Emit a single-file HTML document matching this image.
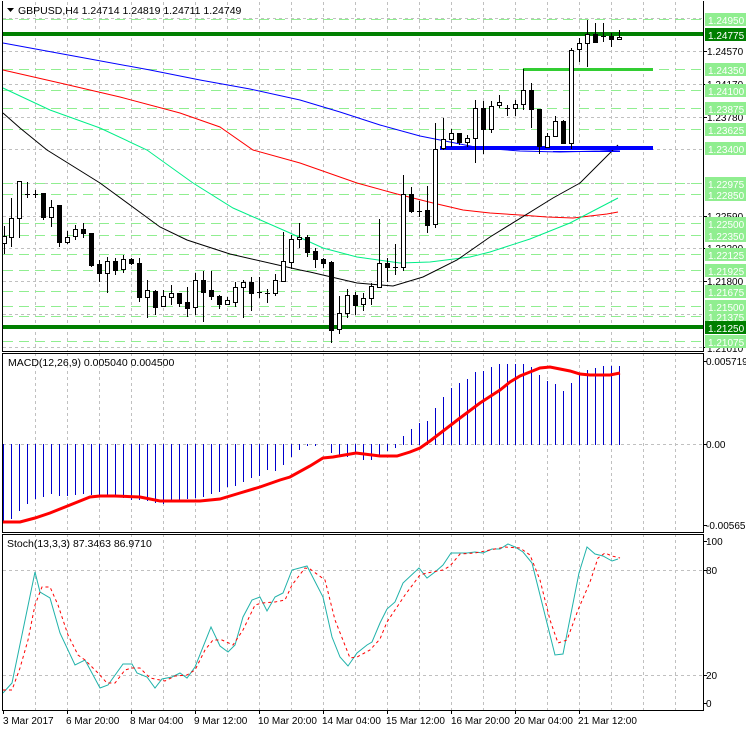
<!DOCTYPE html>
<html><head><meta charset="utf-8"><style>
html,body{margin:0;padding:0;background:#fff;}
svg{display:block;font-family:"Liberation Sans",sans-serif;font-size:10.5px;}
.ax{font-size:10px;}
</style></head><body>
<svg width="746" height="731" viewBox="0 0 746 731" xmlns="http://www.w3.org/2000/svg">
<rect width="746" height="731" fill="#fff"/>
<g shape-rendering="crispEdges">
<g stroke="#c0c0c0" stroke-dasharray="3,3">
<path d="M35.5 2V351M67.5 2V351M99.5 2V351M131.5 2V351M163.5 2V351M195.5 2V351M227.5 2V351M259.5 2V351M291.5 2V351M323.5 2V351M355.5 2V351M387.5 2V351M419.5 2V351M451.5 2V351M483.5 2V351M515.5 2V351M547.5 2V351M579.5 2V351M611.5 2V351M643.5 2V351M675.5 2V351"/>
<path d="M35.5 353V532M67.5 353V532M99.5 353V532M131.5 353V532M163.5 353V532M195.5 353V532M227.5 353V532M259.5 353V532M291.5 353V532M323.5 353V532M355.5 353V532M387.5 353V532M419.5 353V532M451.5 353V532M483.5 353V532M515.5 353V532M547.5 353V532M579.5 353V532M611.5 353V532M643.5 353V532M675.5 353V532"/>
<path d="M35.5 534V710M67.5 534V710M99.5 534V710M131.5 534V710M163.5 534V710M195.5 534V710M227.5 534V710M259.5 534V710M291.5 534V710M323.5 534V710M355.5 534V710M387.5 534V710M419.5 534V710M451.5 534V710M483.5 534V710M515.5 534V710M547.5 534V710M579.5 534V710M611.5 534V710M643.5 534V710M675.5 534V710"/>
<path d="M3 18.5H703M3 51.5H703M3 84.5H703M3 117.5H703M3 149.5H703M3 183.5H703M3 216.5H703M3 248.5H703M3 281.5H703M3 314.5H703M3 347.5H703"/>
<path d="M3 444.5H703"/>
<path d="M3 570.5H703M3 675.5H703"/>
</g>
<g stroke="#90ee90" stroke-dasharray="10,6">
<path d="M3 19.5H703M3 69.5H703M3 90.5H703M3 108.5H703M3 129.5H703M3 183.5H703M3 194.5H703M3 223.5H703M3 235.5H703M3 254.5H703M3 270.5H703M3 291.5H703M3 306.5H703M3 316.5H703M3 341.5H703"/>
</g>
<rect x="3" y="32" width="700" height="4" fill="#007f00"/>
<rect x="3" y="325" width="700" height="4" fill="#007f00"/>
<rect x="523" y="68" width="130" height="3" fill="#32cd32"/>
</g>
<g fill="none" stroke-width="1">
<polyline stroke="#0000ff" points="3,43 90,59 150,70 200,80 250,89 300,100 340,112 380,125 420,136 440,140 480,148 520,151 560,152 600,151 620,150"/>
<polyline stroke="#ff0000" points="3,70 60,83 120,97 180,113 220,127 253,150 300,163 357,183 397,194 433,203 463,210 490,213 520,215 547,217 573,218 607,214 618,212"/>
<polyline stroke="#00ee88" points="3,88 50,110 100,128 147,150 193,183 233,208 290,233 323,248 357,257 400,263 430,262 470,257 490,252 530,239 570,223 618,198"/>
<polyline stroke="#000" points="3,113 20,128 47,150 100,183 160,227 187,240 230,254 300,270 310,272 357,283 393,286 423,277 457,260 490,237 553,198 580,183 618,145"/>
</g>
<g shape-rendering="crispEdges">
<rect x="440" y="146" width="213" height="4" fill="#0000ff"/>
<path d="M553 151.5H620" stroke="#0000ff"/>
</g>
<g shape-rendering="crispEdges" stroke="#000">
<path d="M4.5 226V254M11.5 198V247M19.5 181V238M27.5 182V198M35.5 190V198M43.5 193V220M51.5 200V227M59.5 205V247M67.5 231V244M75.5 225V240M83.5 223V238M91.5 233V267M99.5 260V282M107.5 257V293M115.5 258V275M123.5 255V273M131.5 258V265M139.5 258V302M147.5 280V318M155.5 290V315M163.5 290V307M171.5 285V305M179.5 293V307M187.5 287V317M195.5 273V315M203.5 271V322M211.5 271V300M219.5 295V309M227.5 297V305M235.5 282V307M243.5 280V318M251.5 277V311M259.5 277V298M267.5 289V303M275.5 274V296M283.5 232V282M291.5 235V269M299.5 223V248M307.5 235V257M315.5 248V268M323.5 258V268M331.5 261V343M339.5 296V334M347.5 289V318M355.5 292V315M363.5 293V311M371.5 283V305M379.5 219V287M387.5 258V282M395.5 244V275M403.5 175V271M411.5 187V213M419.5 201V217M427.5 186V233M435.5 123V228M443.5 118V150M451.5 129V147M459.5 133V145M467.5 135V147M475.5 100V163M483.5 101V154M491.5 101V133M499.5 95V108M507.5 105V116M515.5 100V116M523.5 69V110M531.5 83V128M539.5 109V154M547.5 133V148M555.5 116V137M563.5 120V143M571.5 48V149M579.5 38V62M587.5 20V67M595.5 23V43M603.5 23V42M611.5 33V47M619.5 30V39"/>
<path d="M25 194.5H30M33 194.5H38M257 292.5H262M265 293.5H270M393 267.5H398M417 211.5H422M505 108.5H510M601 36.5H606" />
<g fill="#fff">
<rect x="2.5" y="236.5" width="4" height="7"/><rect x="9.5" y="218.5" width="4" height="19"/><rect x="17.5" y="181.5" width="4" height="37"/><rect x="49.5" y="207.5" width="4" height="10"/><rect x="65.5" y="237.5" width="4" height="5"/><rect x="73.5" y="229.5" width="4" height="7"/><rect x="105.5" y="261.5" width="4" height="12"/><rect x="121.5" y="259.5" width="4" height="10"/><rect x="145.5" y="290.5" width="4" height="7"/><rect x="161.5" y="296.5" width="4" height="10"/><rect x="169.5" y="293.5" width="4" height="4"/><rect x="193.5" y="280.5" width="4" height="27"/><rect x="225.5" y="300.5" width="4" height="4"/><rect x="233.5" y="287.5" width="4" height="15"/><rect x="241.5" y="282.5" width="4" height="5"/><rect x="273.5" y="280.5" width="4" height="13"/><rect x="281.5" y="261.5" width="4" height="20"/><rect x="289.5" y="239.5" width="4" height="23"/><rect x="297.5" y="237.5" width="4" height="2"/><rect x="337.5" y="313.5" width="4" height="16"/><rect x="345.5" y="295.5" width="4" height="18"/><rect x="361.5" y="298.5" width="4" height="6"/><rect x="369.5" y="286.5" width="4" height="12"/><rect x="377.5" y="263.5" width="4" height="24"/><rect x="401.5" y="194.5" width="4" height="73"/><rect x="433.5" y="149.5" width="4" height="75"/><rect x="441.5" y="139.5" width="4" height="9"/><rect x="449.5" y="133.5" width="4" height="6"/><rect x="465.5" y="138.5" width="4" height="4"/><rect x="473.5" y="108.5" width="4" height="30"/><rect x="489.5" y="106.5" width="4" height="23"/><rect x="497.5" y="102.5" width="4" height="3"/><rect x="513.5" y="104.5" width="4" height="4"/><rect x="521.5" y="90.5" width="4" height="14"/><rect x="545.5" y="136.5" width="4" height="11"/><rect x="553.5" y="121.5" width="4" height="15"/><rect x="569.5" y="50.5" width="4" height="93"/><rect x="577.5" y="43.5" width="4" height="6"/><rect x="585.5" y="34.5" width="4" height="9"/><rect x="617.5" y="37.5" width="4" height="2"/>
</g>
<g fill="#000">
<rect x="41.5" y="193.5" width="4" height="24"/><rect x="57.5" y="205.5" width="4" height="37"/><rect x="81.5" y="229.5" width="4" height="4"/><rect x="89.5" y="233.5" width="4" height="32"/><rect x="97.5" y="264.5" width="4" height="9"/><rect x="113.5" y="261.5" width="4" height="9"/><rect x="129.5" y="259.5" width="4" height="4"/><rect x="137.5" y="263.5" width="4" height="34"/><rect x="153.5" y="291.5" width="4" height="16"/><rect x="177.5" y="293.5" width="4" height="10"/><rect x="185.5" y="302.5" width="4" height="6"/><rect x="201.5" y="280.5" width="4" height="12"/><rect x="209.5" y="290.5" width="4" height="6"/><rect x="217.5" y="296.5" width="4" height="8"/><rect x="249.5" y="282.5" width="4" height="11"/><rect x="305.5" y="237.5" width="4" height="15"/><rect x="313.5" y="251.5" width="4" height="8"/><rect x="321.5" y="259.5" width="4" height="4"/><rect x="329.5" y="262.5" width="4" height="68"/><rect x="353.5" y="295.5" width="4" height="10"/><rect x="385.5" y="263.5" width="4" height="4"/><rect x="409.5" y="194.5" width="4" height="17"/><rect x="425.5" y="210.5" width="4" height="15"/><rect x="457.5" y="133.5" width="4" height="9"/><rect x="481.5" y="108.5" width="4" height="21"/><rect x="529.5" y="90.5" width="4" height="19"/><rect x="537.5" y="109.5" width="4" height="37"/><rect x="561.5" y="121.5" width="4" height="22"/><rect x="593.5" y="34.5" width="4" height="8"/><rect x="609.5" y="36.5" width="4" height="3"/>
</g>
</g>
<g shape-rendering="crispEdges" stroke="#0000cc">
<path d="M3.5 444V522M11.5 444V519M19.5 444V511M27.5 444V504M35.5 444V499M43.5 444V497M51.5 444V494M59.5 444V496M67.5 444V496M75.5 444V495M83.5 444V494M91.5 444V495M99.5 444V496M107.5 444V496M115.5 444V497M123.5 444V498M131.5 444V500M139.5 444V500M147.5 444V501M155.5 444V503M163.5 444V504M171.5 444V502M179.5 444V500M187.5 444V499M195.5 444V498M203.5 444V497M211.5 444V494M219.5 444V492M227.5 444V487M235.5 444V486M243.5 444V482M251.5 444V478M259.5 444V476M267.5 444V470M275.5 444V471M283.5 444V465M291.5 444V457M299.5 444V450M307.5 444V446M315.5 444V446M331.5 444V453M339.5 444V457M347.5 444V457M355.5 444V453M363.5 444V460M371.5 444V460M379.5 444V455M387.5 444V451M395.5 444V448"/>
<path d="M403.5 445V436M411.5 445V429M419.5 445V423M427.5 445V421M435.5 445V408M443.5 445V397M451.5 445V388M459.5 445V383M467.5 445V379M475.5 445V372M483.5 445V371M491.5 445V367M499.5 445V364M507.5 445V364M515.5 445V364M523.5 445V364M531.5 445V367M539.5 445V375M547.5 445V381M555.5 445V384M563.5 445V391M571.5 445V383M579.5 445V375M587.5 445V370M595.5 445V368M603.5 445V366M611.5 445V366M619.5 445V366"/>
</g>
<polyline fill="none" stroke="#ff0000" stroke-width="3" points="3,522 20,522 35,518 50,513 70,505 90,497 100,496 115,496 140,497 160,501 200,501 220,499 240,493 260,487 280,480 290,477 310,466 323,458 333,457 356,453 380,456 397,456 410,452 420,448 430,441 447,428 460,418 480,403 500,390 510,382 520,376 530,372 540,368 550,367 560,369 570,371 580,374 590,375 610,375 620,373"/>
<polyline fill="none" stroke="#20b2aa" stroke-width="1" points="3,693 12,683 35,572 40,592 50,598 60,633 75,665 85,660 100,688 108,685 123,664 132,664 137,673 147,677 155,688 162,679 172,677 180,673 187,678 195,667 211,627 220,646 228,652 235,645 243,617 252,600 260,597 267,611 275,597 283,593 292,570 307,566 323,597 332,637 340,657 348,666 357,653 367,645 372,642 380,623 387,609 395,602 403,583 419,568 427,578 435,572 443,565 451,553 467,553 475,552 483,553 492,549 500,549 508,544 515,547 523,552 532,563 555,655 563,654 579,573 587,547 595,554 603,556 612,561 618,559"/>
<polyline fill="none" stroke="#ff0000" stroke-width="1" stroke-dasharray="3,3" points="3,690 12,690 20,668 28,640 35,605 42,587 50,587 58,605 68,635 78,655 85,660 97,672 107,683 115,683 125,670 132,668 140,668 150,678 165,681 175,676 187,675 195,670 205,650 213,640 222,640 233,645 243,630 255,605 262,603 275,602 285,600 292,585 305,568 310,569 325,580 335,620 350,658 357,657 370,650 380,639 387,622 395,610 405,595 420,575 427,573 443,570 450,566 460,554 475,553 490,550 505,547 520,548 530,555 540,580 550,620 558,643 567,640 578,610 590,582 598,558 605,553 612,556 620,558"/>
<g shape-rendering="crispEdges" fill="none" stroke="#000">
<path d="M2.5 1V351.5H703.5V1"/>
<path d="M2.5 353.5H703.5V532.5H2.5Z"/>
<path d="M2.5 534.5H703.5V710.5H2.5Z"/>
<path d="M3.5 711V714M67.5 711V714M131.5 711V714M195.5 711V714M259.5 711V714M323.5 711V714M387.5 711V714M451.5 711V714M515.5 711V714M579.5 711V714"/>
<path d="M704 51.5H707M704 84.5H707M704 117.5H707M704 216.5H707M704 248.5H707M704 281.5H707M704 347.5H707M704 361.5H707M704 444.5H707M704 525.5H707M704 541.5H707M704 570.5H707M704 675.5H707M704 703.5H707"/>
</g>
<polygon points="7,8 14,8 10.5,12" fill="#000"/>
<text x="18" y="14" fill="#000">GBPUSD,H4  1.24714 1.24819 1.24711 1.24749</text>
<text x="8" y="366" fill="#000">MACD(12,26,9) 0.005040 0.004500</text>
<text x="7" y="547" fill="#000">Stoch(13,3,3) 87.3463 86.9710</text>
<g fill="#000" class="ax">
<text x="707" y="55">1.24570</text>
<text x="707" y="88">1.24170</text>
<text x="707" y="121">1.23780</text>
<text x="707" y="220">1.22590</text>
<text x="707" y="252">1.22200</text>
<text x="707" y="285">1.21800</text>
<text x="707" y="352">1.21010</text>
<text x="706" y="365">0.005719</text>
<text x="706" y="448">0.00</text>
<text x="706" y="529">-0.00565</text>
<text x="706" y="545">100</text>
<text x="706" y="574">80</text>
<text x="706" y="679">20</text>
<text x="706" y="707">0</text>
</g>
<g shape-rendering="crispEdges" fill="#90ee90">
<rect x="705" y="13" width="41" height="13"/><rect x="705" y="63" width="41" height="13"/><rect x="705" y="84" width="41" height="13"/><rect x="705" y="102" width="41" height="13"/><rect x="705" y="123" width="41" height="13"/><rect x="705" y="142" width="41" height="13"/><rect x="705" y="177" width="41" height="13"/><rect x="705" y="188" width="41" height="13"/><rect x="705" y="217" width="41" height="13"/><rect x="705" y="229" width="41" height="13"/><rect x="705" y="248" width="41" height="13"/><rect x="705" y="264" width="41" height="13"/><rect x="705" y="285" width="41" height="13"/><rect x="705" y="300" width="41" height="13"/><rect x="705" y="310" width="41" height="13"/><rect x="705" y="335" width="41" height="13"/>
<rect x="705" y="28" width="41" height="13" fill="#007f00"/><rect x="705" y="321" width="41" height="13" fill="#007f00"/>
</g>
<g fill="#fff" class="ax">
<text x="708" y="24">1.24950</text><text x="708" y="39">1.24775</text><text x="708" y="74">1.24350</text><text x="708" y="95">1.24100</text><text x="708" y="113">1.23875</text><text x="708" y="134">1.23625</text><text x="708" y="153">1.23400</text><text x="708" y="188">1.22975</text><text x="708" y="199">1.22850</text><text x="708" y="228">1.22500</text><text x="708" y="240">1.22350</text><text x="708" y="259">1.22125</text><text x="708" y="275">1.21925</text><text x="708" y="296">1.21675</text><text x="708" y="311">1.21500</text><text x="708" y="321">1.21375</text><text x="708" y="332">1.21250</text><text x="708" y="346">1.21075</text>
</g>
<g fill="#000" class="ax">
<text x="3" y="724">3 Mar 2017</text>
<text x="66" y="724">6 Mar 20:00</text>
<text x="130" y="724">8 Mar 04:00</text>
<text x="194" y="724">9 Mar 12:00</text>
<text x="258" y="724">10 Mar 20:00</text>
<text x="322" y="724">14 Mar 04:00</text>
<text x="386" y="724">15 Mar 12:00</text>
<text x="451" y="724">16 Mar 20:00</text>
<text x="514" y="724">20 Mar 04:00</text>
<text x="578" y="724">21 Mar 12:00</text>
</g>
</svg>
</body></html>
